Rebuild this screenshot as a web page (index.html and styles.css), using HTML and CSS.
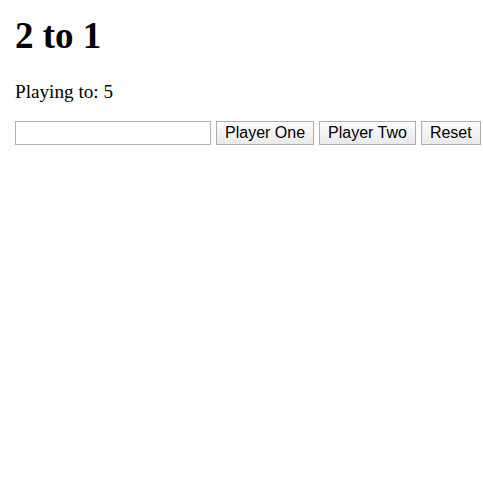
FILE: index.html
```html
<!DOCTYPE html>
<html>
<head>
<meta charset="utf-8">
<link rel="stylesheet" href="styles.css">
</head>
<body>
<div class="page">
  <h1 class="title">2 to 1</h1>
  <p class="status">Playing to: 5</p>
  <div class="controls">
    <input class="score-input" type="text">
    <button class="btn">Player One</button>
    <button class="btn">Player Two</button>
    <button class="btn">Reset</button>
  </div>
</div>
</body>
</html>
```

FILE: styles.css
```css
body {
  margin: 0;
  font-family: "Liberation Serif", "Times New Roman", serif;
  background: #fff;
  color: #000;
}
.page {
  padding: 0 15px;
}
.title {
  font-size: 37px;
  font-weight: bold;
  margin: 14px 0 0;
  line-height: 44px;
}
.status {
  font-size: 19.2px;
  margin: 23px 0 0;
  line-height: 22px;
}
.controls {
  display: flex;
  align-items: center;
  gap: 5px;
  margin-top: 18px;
}
.score-input {
  flex: 0 0 196px;
  box-sizing: border-box;
  width: 196px;
  height: 24px;
  margin: 0;
  border: 1px solid #b4b4b4;
  padding: 1px 2px;
  font-family: "Liberation Sans", Arial, sans-serif;
  font-size: 16px;
}
.btn {
  flex: 0 0 auto;
  white-space: nowrap;
  box-sizing: border-box;
  height: 24px;
  margin: 0;
  padding: 0 8px;
  font-family: "Liberation Sans", Arial, sans-serif;
  font-size: 16px;
  color: #000;
  background: linear-gradient(#fdfdfd, #e9e9e9);
  border: 1px solid #adadad;
  border-radius: 0;
  line-height: 20px;
}
```
